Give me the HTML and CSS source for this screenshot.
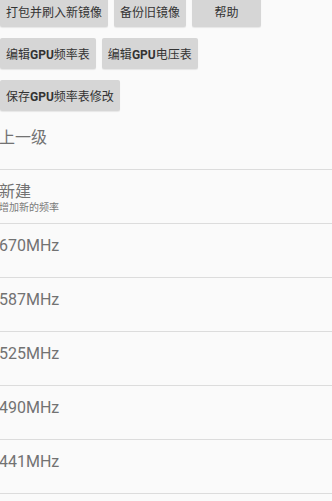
FILE: index.html
```html
<!DOCTYPE html>
<html lang="zh">
<head>
<meta charset="utf-8">
<link rel="stylesheet" href="styles.css">
</head>
<body>
<div class="toolbar">
  <div class="row">
    <button class="btn">打包并刷入新镜像</button>
    <button class="btn">备份旧镜像</button>
    <button class="btn">帮助</button>
  </div>
  <div class="row">
    <button class="btn">编辑<b>GPU</b>频率表</button>
    <button class="btn">编辑<b>GPU</b>电压表</button>
  </div>
  <div class="row">
    <button class="btn">保存<b>GPU</b>频率表修改</button>
  </div>
</div>
<ul class="list">
  <li class="item"><div class="title">上一级</div></li>
  <li class="item"><div class="title">新建</div><div class="summary">增加新的频率</div></li>
  <li class="item"><div class="title">670MHz</div></li>
  <li class="item"><div class="title">587MHz</div></li>
  <li class="item"><div class="title">525MHz</div></li>
  <li class="item"><div class="title">490MHz</div></li>
  <li class="item"><div class="title">441MHz</div></li>
</ul>
</body>
</html>
```
FILE: styles.css
```css
html, body {
  margin: 0;
  padding: 0;
  background: #fafafa;
  font-family: "Roboto", "Noto Sans CJK SC", sans-serif;
  overflow: hidden;
}
.toolbar {
  display: flex;
  flex-direction: column;
  gap: 11px;
  margin-top: -4px;
}
.row {
  display: flex;
  gap: 6px;
}
.btn {
  height: 31px;
  min-width: 69px;
  padding: 0 6px;
  border: none;
  border-radius: 2px;
  background: #d6d6d6;
  color: #333;
  font-family: "Roboto", "Noto Sans CJK SC", sans-serif;
  font-size: 12px;
  box-shadow: 0 1px 1px rgba(0,0,0,0.08);
  white-space: nowrap;
}
.btn b {
  font-weight: 700;
}
.list {
  list-style: none;
  margin: 5px 0 0 0;
  padding: 0;
}
.item {
  height: 54px;
  box-sizing: border-box;
  padding: 12px 0 0 0;
  margin-left: -1px;
  border-bottom: 1px solid #dcdcdc;
}
.title {
  font-size: 16px;
  line-height: 20px;
  color: #727272;
}
.summary {
  font-size: 10px;
  line-height: 12px;
  color: #7a7a7a;
}
```
